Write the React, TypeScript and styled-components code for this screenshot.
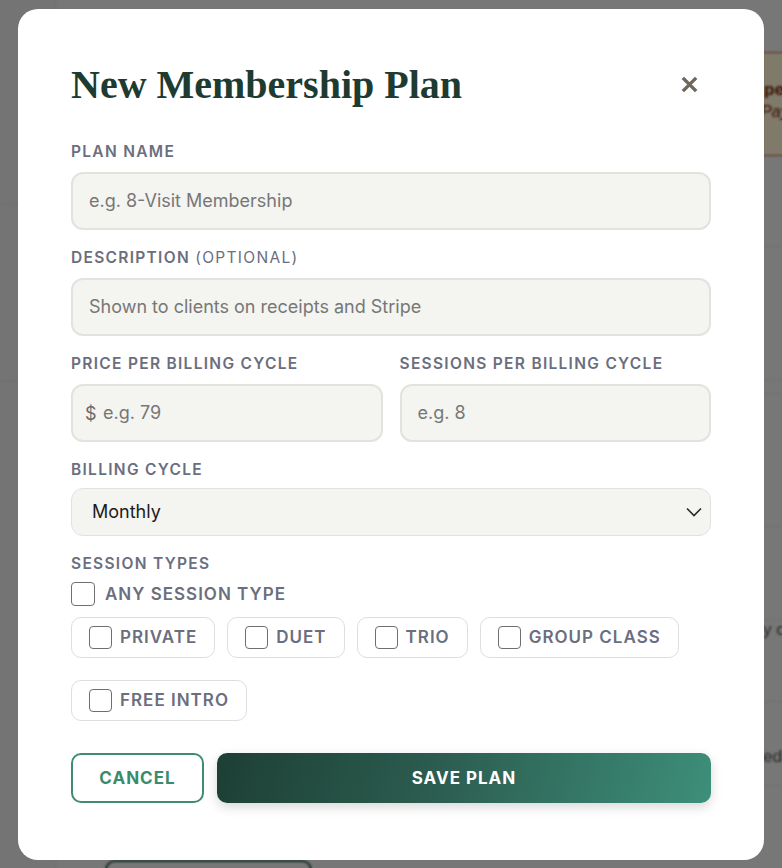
import React from "react";
import styled, { createGlobalStyle } from "styled-components";

const sans = `"Inter", "Liberation Sans", sans-serif`;
const serif = `"Liberation Serif", serif`;

const GlobalStyle = createGlobalStyle`
  html, body {
    margin: 0;
    padding: 0;
    height: 100%;
  }
  body {
    font-family: ${sans};
    background: #eeeeee;
    overflow: hidden;
  }
`;

// rows of the page that sits behind the dialog
const pageRows = [
  { h: 91, text: "", top: 0 },
  { h: 134, text: "", top: 0 },
  { h: 13, text: "", top: 0 },
  { h: 133, text: "", top: 0 },
  { h: 93, text: "", top: 0 },
  { h: 82, text: "y c", top: 0 },
  { h: 84, text: "ed", top: 45 },
];

const sessionTypes = ["Private", "Duet", "Trio", "Group Class", "Free Intro"];

const App: React.FC = () => {
  return (
    <>
      <GlobalStyle />
      <Page>
        <Sidebar>
          <SideBlock $h={205} />
          <SideBlock $h={177} />
        </Sidebar>
        <Main>
          <Banner>
            <strong>pe</strong>
            <em>Pay</em>
          </Banner>
          {pageRows.map((r, i) => (
            <PageRow key={i} $h={r.h} $top={r.top}>
              {r.text && <RowCell>{r.text}</RowCell>}
            </PageRow>
          ))}
          <GhostButton />
        </Main>
      </Page>

      <Overlay>
        <Modal role="dialog" aria-labelledby="plan-title">
          <Header>
            <Title id="plan-title">New Membership Plan</Title>
            <CloseButton aria-label="Close">
              <svg width="19" height="19" viewBox="0 0 20 20">
                <path
                  d="M3 3 L17 17 M17 3 L3 17"
                  stroke="currentColor"
                  strokeWidth="3.6"
                  strokeLinecap="butt"
                />
              </svg>
            </CloseButton>
          </Header>

          <Form onSubmit={(e) => e.preventDefault()}>
            <Field>
              <Label>Plan Name</Label>
              <TextInput placeholder="e.g. 8-Visit Membership" />
            </Field>

            <Field>
              <Label>
                Description <Optional>(optional)</Optional>
              </Label>
              <TextInput placeholder="Shown to clients on receipts and Stripe" />
            </Field>

            <TwoCol>
              <Field>
                <Label>Price per billing cycle</Label>
                <PrefixWrap>
                  <Prefix>$</Prefix>
                  <TextInput $withPrefix placeholder="e.g. 79" />
                </PrefixWrap>
              </Field>
              <Field>
                <Label>Sessions per billing cycle</Label>
                <TextInput placeholder="e.g. 8" />
              </Field>
            </TwoCol>

            <Field>
              <Label $gap={9}>Billing cycle</Label>
              <SelectWrap>
                <Select defaultValue="monthly">
                  <option value="monthly">Monthly</option>
                  <option value="quarterly">Quarterly</option>
                  <option value="yearly">Yearly</option>
                </Select>
                <Chevron width="18" height="18" viewBox="0 0 18 18">
                  <path
                    d="M2 5.5 L9 12.5 L16 5.5"
                    fill="none"
                    stroke="#2a2a2a"
                    strokeWidth="1.6"
                  />
                </Chevron>
              </SelectWrap>
            </Field>

            <Field>
              <Label $gap={9}>Session types</Label>
              <AnyRow>
                <Check type="checkbox" />
                <CheckText>Any session type</CheckText>
              </AnyRow>
              <Chips>
                {sessionTypes.map((t) => (
                  <Chip key={t}>
                    <Check type="checkbox" $small />
                    <CheckText>{t}</CheckText>
                  </Chip>
                ))}
              </Chips>
            </Field>

            <Actions>
              <CancelButton type="button">CANCEL</CancelButton>
              <SaveButton type="submit">SAVE PLAN</SaveButton>
            </Actions>
          </Form>
        </Modal>
      </Overlay>
    </>
  );
};

export default App;

/* background page */

const Page = styled.div`
  display: flex;
  height: 100vh;
`;

const Sidebar = styled.aside`
  width: 55px;
  flex-shrink: 0;
  background: #e9e9e9;
  border-right: 1px solid #dcdcdc;
`;

const SideBlock = styled.div<{ $h: number }>`
  height: ${(p) => p.$h}px;
  box-sizing: border-box;
  border-bottom: 1px solid #d6d6d6;
`;

const Main = styled.main`
  flex: 1;
  display: flex;
  flex-direction: column;
  overflow: hidden;
  padding-top: 52px;
`;

const Banner = styled.div`
  align-self: flex-end;
  flex-shrink: 0;
  width: 20px;
  height: 104px;
  box-sizing: border-box;
  padding: 26px 0 0 1px;
  background: #fff4d4;
  border: 1px solid #b3643a;
  border-right: none;
  display: flex;
  flex-direction: column;
  overflow: hidden;
  white-space: nowrap;
  font-family: "Liberation Sans", sans-serif;
  font-size: 17px;
  line-height: 22px;
  color: #7a2a0c;

  em {
    font-size: 16px;
    margin-left: -3px;
  }
`;

const PageRow = styled.div<{ $h: number; $top: number }>`
  flex-shrink: 0;
  height: ${(p) => p.$h}px;
  box-sizing: border-box;
  padding-top: ${(p) => p.$top}px;
  border-bottom: 1px solid #e0e0e0;
  display: flex;
  justify-content: flex-end;
  align-items: flex-start;
`;

const RowCell = styled.span`
  width: 19px;
  overflow: hidden;
  white-space: nowrap;
  font-family: "Liberation Sans", sans-serif;
  font-size: 17px;
  line-height: 20px;
  color: #5a5a5a;
`;

const GhostButton = styled.div`
  margin: 74px 0 0 49px;
  width: 203px;
  height: 40px;
  flex-shrink: 0;
  border: 2px solid #2c5a4b;
  border-radius: 10px;
`;

/* dialog */

const Overlay = styled.div`
  position: fixed;
  inset: 0;
  background: rgba(0, 0, 0, 0.5);
  backdrop-filter: blur(1px);
  display: flex;
  align-items: center;
  justify-content: center;
`;

const Modal = styled.div`
  width: 746px;
  box-sizing: border-box;
  padding: 51px 53px 57px;
  background: #ffffff;
  border-radius: 20px;
`;

const Header = styled.div`
  display: flex;
  align-items: center;
  justify-content: space-between;
`;

const Title = styled.h2`
  margin: 0;
  font-family: ${serif};
  font-weight: 700;
  font-size: 40px;
  line-height: 49px;
  color: #1d3b31;
`;

const CloseButton = styled.button`
  width: 44px;
  height: 44px;
  padding: 0;
  border: none;
  background: transparent;
  color: #6e675c;
  display: flex;
  align-items: center;
  justify-content: center;
  cursor: pointer;
`;

const Form = styled.form`
  margin-top: 34px;
  display: flex;
  flex-direction: column;
  gap: 19px;
`;

const Field = styled.div`
  display: flex;
  flex-direction: column;
  min-width: 0;
`;

const Label = styled.label<{ $gap?: number }>`
  font-size: 15.5px;
  line-height: 18px;
  font-weight: 600;
  letter-spacing: 1.3px;
  text-transform: uppercase;
  color: #6b6e7e;
  margin-bottom: ${(p) => p.$gap ?? 11}px;
`;

const Optional = styled.span`
  font-weight: 400;
`;

const TextInput = styled.input<{ $withPrefix?: boolean }>`
  width: 100%;
  height: 58px;
  box-sizing: border-box;
  padding: 0 16px 0 ${(p) => (p.$withPrefix ? 30 : 16)}px;
  border: 2px solid #e2e2de;
  border-radius: 12px;
  background: #f4f4f0;
  font-family: ${sans};
  font-size: 18px;
  color: #222;
  outline: none;

  &::placeholder {
    color: #777777;
  }
`;

const TwoCol = styled.div`
  display: grid;
  grid-template-columns: 1fr 1fr;
  gap: 17px;
`;

const PrefixWrap = styled.div`
  position: relative;
`;

const Prefix = styled.span`
  position: absolute;
  left: 14px;
  top: 50%;
  transform: translateY(-50%);
  font-size: 18px;
  color: #6a6a6a;
  pointer-events: none;
`;

const SelectWrap = styled.div`
  position: relative;
`;

const Select = styled.select`
  width: 100%;
  height: 48px;
  box-sizing: border-box;
  padding: 0 40px 0 20px;
  border: 1px solid #e2e2de;
  border-radius: 12px;
  background: #f4f4f0;
  appearance: none;
  font-family: ${sans};
  font-size: 18px;
  color: #1c1c1c;
  outline: none;
`;

const Chevron = styled.svg`
  position: absolute;
  right: 8px;
  top: 50%;
  transform: translateY(-50%);
  pointer-events: none;
`;

const AnyRow = styled.label`
  display: flex;
  align-items: center;
  gap: 10px;
`;

const Check = styled.input<{ $small?: boolean }>`
  appearance: none;
  margin: 0;
  flex-shrink: 0;
  width: ${(p) => (p.$small ? 23 : 24)}px;
  height: ${(p) => (p.$small ? 23 : 24)}px;
  box-sizing: border-box;
  border: 1.5px solid #6f6f6f;
  border-radius: 4px;
  background: #fff;
`;

const CheckText = styled.span`
  font-size: 17px;
  font-weight: 600;
  letter-spacing: 1px;
  text-transform: uppercase;
  color: #6b6e7e;
`;

const Chips = styled.div`
  margin-top: 11px;
  display: flex;
  flex-wrap: wrap;
  column-gap: 12px;
  row-gap: 22px;
`;

const Chip = styled.label`
  display: flex;
  align-items: center;
  gap: 8px;
  height: 41px;
  box-sizing: border-box;
  padding: 0 17px;
  border: 1px solid #dedede;
  border-radius: 10px;
  background: #fff;
`;

const Actions = styled.div`
  margin-top: 13px;
  display: flex;
  gap: 13px;
`;

const CancelButton = styled.button`
  width: 133px;
  height: 50px;
  box-sizing: border-box;
  border: 2px solid #3f8c72;
  border-radius: 10px;
  background: #fff;
  font-family: ${sans};
  font-size: 17px;
  font-weight: 700;
  letter-spacing: 1px;
  color: #3a8a6e;
  cursor: pointer;
`;

const SaveButton = styled.button`
  flex: 1;
  height: 50px;
  border: none;
  border-radius: 10px;
  background: linear-gradient(105deg, #1d3f35 0%, #2c5d50 45%, #3d8f7a 100%);
  box-shadow: 0 4px 12px rgba(0, 0, 0, 0.16);
  font-family: ${sans};
  font-size: 17px;
  font-weight: 700;
  letter-spacing: 1px;
  color: #fff;
  cursor: pointer;
`;
